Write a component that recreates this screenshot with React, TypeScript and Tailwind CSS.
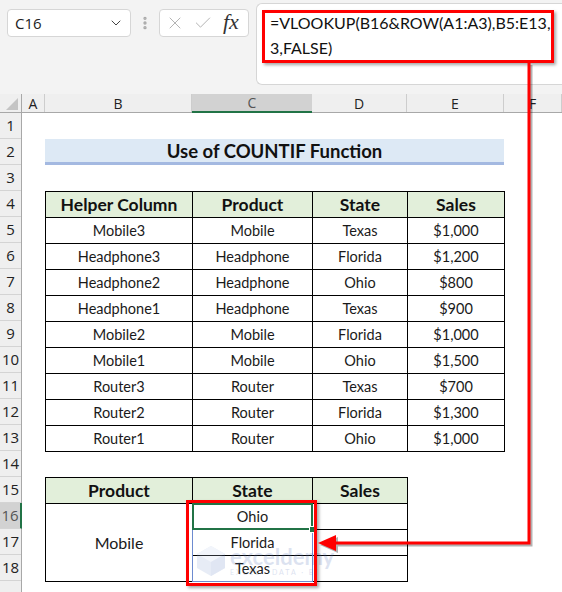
import React from "react";
import { ChevronDown, X, Check, EllipsisVertical } from "lucide-react";

const rows1 = [
  ["Mobile3", "Mobile", "Texas", "$1,000"],
  ["Headphone3", "Headphone", "Florida", "$1,200"],
  ["Headphone2", "Headphone", "Ohio", "$800"],
  ["Headphone1", "Headphone", "Texas", "$900"],
  ["Mobile2", "Mobile", "Florida", "$1,000"],
  ["Mobile1", "Mobile", "Ohio", "$1,500"],
  ["Router3", "Router", "Texas", "$700"],
  ["Router2", "Router", "Florida", "$1,300"],
  ["Router1", "Router", "Ohio", "$1,000"],
];

const cols = [
  { l: "A", w: "w-[23px]" },
  { l: "B", w: "w-[147px]" },
  { l: "C", w: "w-[120px]", sel: true },
  { l: "D", w: "w-[95px]" },
  { l: "E", w: "w-[97px]" },
  { l: "F", w: "w-[58px]" },
];

export default function App() {
  const rowNums = Array.from({ length: 19 }, (_, i) => i + 1);
  return (
    <div className="relative w-[562px] h-[592px] overflow-hidden bg-white font-['Lato','Open_Sans',sans-serif] text-[#1a1a1a]">
      {/* Top formula area */}
      <div className="flex items-start h-[94px] bg-[#f3f3f3]">
        <div className="ml-[7px] mt-[9px] w-[124px] h-[28px] bg-white border border-[#d6d6d6] rounded-[4px] flex items-center justify-between pl-[7px] pr-[6px]">
          <span className="text-[15px] font-['Open_Sans',sans-serif] text-[#222]">C16</span>
          <ChevronDown size={16} strokeWidth={1.5} className="text-[#444]" />
        </div>
        <div className="w-[28px] mt-[15px] flex justify-center">
          <EllipsisVertical size={16} strokeWidth={3} className="text-[#a9a9a9]" />
        </div>
        <div className="mt-[9px] w-[90px] h-[28px] bg-white border border-[#d6d6d6] rounded-[4px] flex items-center pl-[5px] gap-[8px]">
          <X size={20} strokeWidth={1.2} className="text-[#b4b4b4]" />
          <Check size={20} strokeWidth={1.2} className="text-[#b4b4b4]" />
          <span className="ml-[2px] text-[22px] italic font-['Liberation_Serif',serif] text-[#333] leading-none -mt-[3px]">fx</span>
        </div>
        <div className="ml-[7px] mt-[3px] flex-1 h-[82px] bg-white border border-r-0 border-[#d6d6d6] rounded-l-[6px] pl-[13px] pt-[6px] text-[16px] leading-[25px] text-[#111]">
          <div>=VLOOKUP(B16&amp;ROW(A1:A3),B5:E13,</div>
          <div>3,FALSE)</div>
        </div>
      </div>

      {/* Column headers */}
      <div className="flex h-[19px] bg-[#efefef] border-b border-[#a8a8a8] text-[14px] font-['Open_Sans',sans-serif]">
        <div className="w-[22px] border-r border-[#a8a8a8] relative">
          <div className="absolute right-[3px] bottom-[2px] w-0 h-0 border-l-[12px] border-l-transparent border-b-[12px] border-b-[#c4c4c4]" />
        </div>
        {cols.map((c) => (
          <div
            key={c.l}
            className={`${c.w} flex items-center justify-center ${
              c.sel
                ? "bg-[#d2d2d2] border-b-2 border-[#217346] text-[#555] -mb-px"
                : "border-r border-[#cdcdcd] text-[#222]"
            }`}
          >
            {c.l}
          </div>
        ))}
      </div>

      {/* Sheet body */}
      <div className="flex">
        <div className="w-[22px] bg-[#efefef] border-r border-[#a8a8a8] text-[15px] font-['Open_Sans',sans-serif]">
          {rowNums.map((n) => (
            <div
              key={n}
              className={`h-[26px] flex items-center justify-center border-b border-[#d4d4d4] ${
                n === 16 ? "bg-[#d2d2d2] text-[#555] border-r-2 border-r-[#217346] -mr-px" : "text-[#222]"
              }`}
            >
              {n < 19 ? n : ""}
            </div>
          ))}
        </div>

        <div className="pl-[23px] flex flex-col">
          <div className="h-[26px]" />
          <div className="w-[459px] h-[26px] bg-[#dde9f5] border-b-[3px] border-[#a4b9e1] flex items-center justify-center pt-[2px] text-[18.5px] font-bold text-[#111]">
            Use of COUNTIF Function
          </div>
          <div className="h-[26px]" />

          {/* Table 1 */}
          <div className="grid grid-cols-[146px_119px_94px_96px] auto-rows-[25px] gap-px bg-black border border-black w-[460px] text-[14.5px]">
            {["Helper Column", "Product", "State", "Sales"].map((h) => (
              <div key={h} className="bg-[#e2efda] flex items-center justify-center pt-[2px] font-bold text-[17.5px] text-[#111]">
                {h}
              </div>
            ))}
            {rows1.map((r, i) =>
              r.map((v, j) => (
                <div key={`${i}-${j}`} className="bg-white flex items-center justify-center pt-px">
                  {v}
                </div>
              ))
            )}
          </div>

          <div className="h-[25px]" />

          {/* Table 2 */}
          <div className="relative grid grid-cols-[146px_119px_94px] grid-rows-[25px_25px_25px_25px] gap-px bg-black border border-black w-[363px] text-[14.5px]">
            {["Product", "State", "Sales"].map((h) => (
              <div key={h} className="bg-[#e2efda] flex items-center justify-center pt-[2px] font-bold text-[17.5px] text-[#111]">
                {h}
              </div>
            ))}
            <div className="bg-white row-span-3 flex items-center justify-center text-[16px]">Mobile</div>
            <div className="bg-white flex items-center justify-center pt-px">Ohio</div>
            <div className="bg-white" />
            <div className="bg-white flex items-center justify-center pt-px">Florida</div>
            <div className="bg-white" />
            <div className="bg-white flex items-center justify-center pt-px">Texas</div>
            <div className="bg-white" />

            {/* spill range */}
            <div className="absolute left-[146px] top-[25px] w-[121px] h-[79px] border border-[#6d8bd0]" />
            {/* active cell */}
            <div className="absolute left-[146px] top-[25px] w-[121px] h-[27px] border-2 border-[#217346]" />
            <div className="absolute left-[263px] top-[48px] w-[7px] h-[7px] bg-[#217346] border border-white" />
          </div>
        </div>
      </div>

      {/* watermark */}
      <div className="absolute left-[196px] top-[545px] flex items-center gap-[4px] opacity-[0.2] pointer-events-none">
        <svg width="30" height="32" viewBox="0 0 30 32">
          <polygon points="15,1 29,9 29,23 15,31 1,23 1,9" fill="#8aa4d6" />
          <polygon points="15,1 29,9 15,17 1,9" fill="#c3d2ee" />
          <polygon points="15,17 29,9 29,23 15,31" fill="#6b88c8" />
        </svg>
        <div className="flex flex-col leading-none">
          <span className="text-[22px] font-bold text-[#5573b8]">exceldemy</span>
          <span className="text-[7px] tracking-[2px] text-[#5573b8] mt-[1px]">EXCEL · DATA · BI</span>
        </div>
      </div>

      {/* Red annotation boxes */}
      <div className="absolute left-[262px] top-[10px] w-[292px] h-[53px] border-[3px] border-[#ff0000] shadow-[2px_2px_3px_rgba(0,0,0,0.35)] pointer-events-none" />
      <div className="absolute left-[186px] top-[500px] w-[131px] h-[86px] border-[3px] border-[#ff0000] shadow-[2px_2px_3px_rgba(0,0,0,0.35)] pointer-events-none" />

      {/* Connector arrow */}
      <svg className="absolute left-0 top-0 pointer-events-none" width="562" height="592" viewBox="0 0 562 592">
        <g transform="translate(2,2)" opacity="0.3">
          <path d="M529 63 L529 543 L334 543" fill="none" stroke="#000" strokeWidth="3" />
          <polygon points="318,543 336,535 336,551" fill="#000" />
        </g>
        <path d="M529 63 L529 543 L334 543" fill="none" stroke="#ff0000" strokeWidth="3" />
        <polygon points="318,543 336,535 336,551" fill="#ff0000" />
      </svg>
    </div>
  );
}
